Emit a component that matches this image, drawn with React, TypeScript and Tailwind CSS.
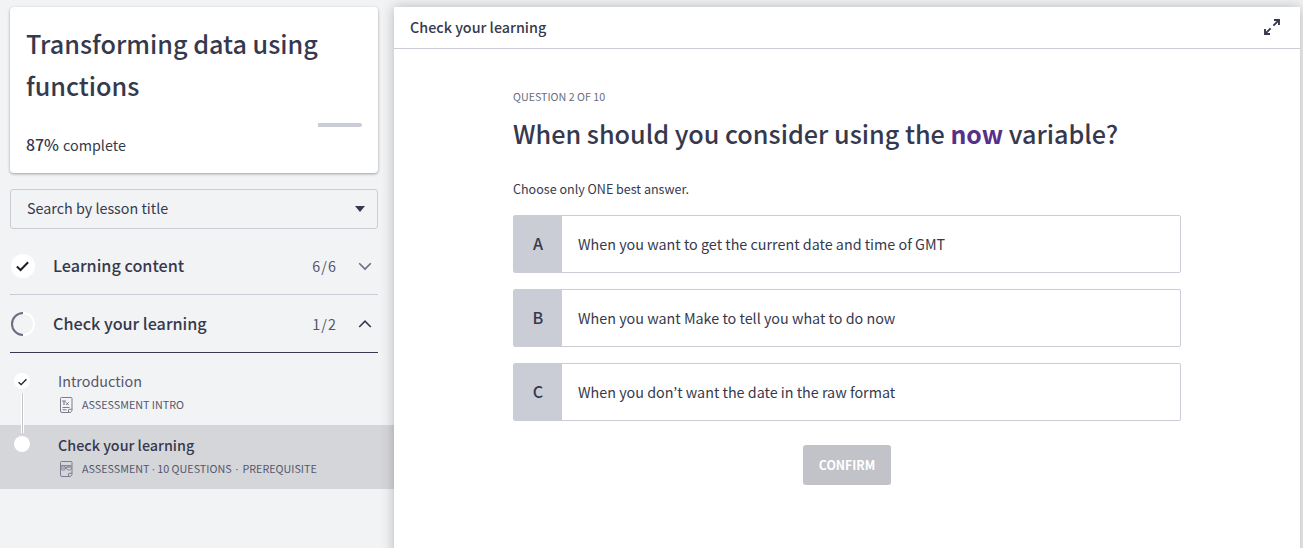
import type { ReactNode } from "react";

const answers = [
  { key: "A", text: "When you want to get the current date and time of GMT" },
  { key: "B", text: "When you want Make to tell you what to do now" },
  { key: "C", text: "When you don’t want the date in the raw format" },
];

function DocIcon({ children }: { children: ReactNode }) {
  return (
    <svg width="14" height="18" viewBox="0 0 14 18" fill="none" stroke="#7b7c90" className="ml-[1px] shrink-0">
      <path d="M9.5 16.5H3Q1.5 16.5 1.5 15V2.5Q1.5 1.5 2.5 1.5H12Q13 1.5 13 2.5V14.5L11.5 16.5H9.5V14Q9.5 13.3 10.2 13.3H13" />
      {children}
    </svg>
  );
}

function Check({ size }: { size: number }) {
  return (
    <svg width={size} height={size} viewBox="0 0 12 12" fill="none" stroke="#1d1d25" strokeWidth="1.8">
      <path d="M0.8 7L4.2 10.2L11.2 3" />
    </svg>
  );
}

function Chevron({ up = false }: { up?: boolean }) {
  return (
    <svg width="14" height="14" viewBox="0 0 14 14" fill="none" strokeWidth="1.6" stroke={up ? "#36394d" : "#6b6c80"}>
      <path d={up ? "M1.2 10L7 4.2L12.8 10" : "M1.2 4.2L7 10L12.8 4.2"} />
    </svg>
  );
}

function Dot({ wide = false }: { wide?: boolean }) {
  return <span className={`font-['Open_Sans',sans-serif] ${wide ? "mx-[4px]" : "mx-[2.5px]"}`}>·</span>;
}

function Section({ icon, title, count, open }: { icon: ReactNode; title: string; count: string; open?: boolean }) {
  return (
    <div className={`flex h-[58px] items-center border-b pr-[6px] ${open ? "border-[#36394d]" : "border-[#caccd6]"}`}>
      <div className="flex h-6 w-[25px] shrink-0 items-center justify-center">{icon}</div>
      <span className="ml-[18px] flex-1 pb-[2px] text-[16.18px] font-medium">{title}</span>
      <span className="mr-[21px] text-[14.3px] tracking-[1.1px] text-[#55566b]">{count}</span>
      <Chevron up={open} />
    </div>
  );
}

export default function App() {
  return (
    <div className="flex h-[548px] w-[1303px] overflow-hidden bg-[#f2f3f5] pt-[7px] font-['Noto_Sans_CJK_KR','Noto_Sans_CJK_SC',sans-serif] text-[14.34px] leading-6 text-[#36394d]">
      <aside className="w-[394px] shrink-0">
        <section className="ml-[10px] h-[166px] w-[368px] rounded-[4px] bg-white px-4 pt-[15px] shadow-[0_1px_3px_rgba(0,0,0,0.35)]">
          <h1 className="text-[25.2px] leading-[42px] font-medium">Transforming data using functions</h1>
          <div className="mt-[17px] flex h-1 justify-end">
            <div className="w-[44px] rounded-r-[2px] bg-[#caccd6]" />
          </div>
          <p className="mt-[6px] flex items-baseline">
            <span className="text-[15.9px] font-medium">87%</span>
            <span className="ml-1">complete</span>
          </p>
        </section>

        <div className="mt-4 ml-[10px] flex h-10 w-[368px] items-center justify-between rounded-[3px] border border-[#caccd6] pr-3 pl-4">
          <span className="pb-[2px]">Search by lesson title</span>
          <svg width="10" height="6" viewBox="0 0 10 6" fill="#36394d">
            <path d="M0 0H10L5 6Z" />
          </svg>
        </div>

        <nav className="mt-2 ml-[10px] w-[368px]">
          <Section
            title="Learning content"
            count="6/6"
            icon={
              <span className="flex size-6 items-center justify-center rounded-full bg-white">
                <Check size={13} />
              </span>
            }
          />
          <Section
            open
            title="Check your learning"
            count="1/2"
            icon={
              <svg width="24" height="24" viewBox="0 0 24 24" fill="none" strokeWidth="2">
                <path stroke="#fff" d="M12 1A11 11 0 0 1 12 23" />
                <path stroke="#6b6c80" d="M12 1A11 11 0 0 0 12 23" />
              </svg>
            }
          />
        </nav>

        <div className="mt-2 flex h-16">
          <div className="flex w-[44px] shrink-0 flex-col items-center pt-3">
            <span className="flex size-4 shrink-0 items-center justify-center rounded-full bg-white">
              <Check size={9} />
            </span>
            <span className="relative z-10 mt-1 ml-[1px] h-10 w-[3px] shrink-0 border-x border-x-white bg-[#c4c5cb]" />
          </div>
          <div className="ml-[14px] pt-2">
            <div className="text-[#55566b]">Introduction</div>
            <div className="mt-[1px] flex h-[22px] items-center gap-[9px] text-[10.75px] text-[#55566b]">
              <DocIcon>
                <path strokeWidth="1.2" d="M3 5H7M5 5V9" />
                <path d="M7 6.3L9.6 9M9.6 6.3L7 9M3.5 11.5H10.5M3.5 13.8H7.5" />
              </DocIcon>
              <span>ASSESSMENT INTRO</span>
            </div>
          </div>
        </div>
        <div className="flex h-16 bg-[#d5d6da]">
          <div className="flex w-[44px] shrink-0 justify-center pt-[11px]">
            <span className="size-4 rounded-full bg-white" />
          </div>
          <div className="ml-[14px] pt-2">
            <div className="font-medium">Check your learning</div>
            <div className="mt-[1px] flex h-[22px] items-center gap-[9px] text-[10.75px] text-[#55566b]">
              <DocIcon>
                <g strokeWidth="0.9">
                  <ellipse cx="4.2" cy="8" rx="2.4" ry="2.2" />
                  <ellipse cx="10" cy="8" rx="2.4" ry="2.2" />
                  <path d="M2.5 8H5.5L8.5 7.2H11.5M2 5.6H12.5" />
                </g>
              </DocIcon>
              <span>
                ASSESSMENT
                <Dot />
                10 QUESTIONS
                <Dot wide />
                PREREQUISITE
              </span>
            </div>
          </div>
        </div>
      </aside>

      <main className="h-[560px] w-[906px] shrink-0 bg-white shadow-[0_0_12px_rgba(0,0,0,0.25)]">
        <header className="flex h-[42px] items-center justify-between border-b border-[#caccd6] pr-5 pl-4">
          <span className="pb-[2px] font-medium">Check your learning</span>
          <svg width="16" height="16" viewBox="0 0 16 16" fill="none" stroke="#36394d" strokeWidth="1.9" className="-mt-[2px]">
            <path d="M9.4 6.6L14.6 1.4M10 1H15V6M6.6 9.4L1.4 14.6M1 10V15H6" />
          </svg>
        </header>
        <div className="mx-auto w-[668px] pt-9">
          <div className="text-[10.7px] text-[#6b6c80]">QUESTION 2 OF 10</div>
          <h2 className="mt-[3px] text-[25.19px] leading-[42px] font-medium">
            When should you consider using the <b className="text-[24.8px] font-bold text-[#57308a]">now</b> variable?
          </h2>
          <p className="mt-[23px] text-[12.54px]">Choose only ONE best answer.</p>
          <div className="mt-[14px] flex flex-col gap-4">
            {answers.map((a) => (
              <div key={a.key} className="flex h-[58px] overflow-hidden rounded-[2px] border border-[#caccd6]">
                <div className="flex w-12 items-center justify-center bg-[#caccd6] pb-[2px] text-[16.15px] font-medium">{a.key}</div>
                <div className="flex items-center pl-4">{a.text}</div>
              </div>
            ))}
          </div>
          <button className="mx-auto mt-6 block h-10 w-[88px] rounded-[3px] bg-[#c2c3c9] text-[12.3px] font-bold text-white">
            CONFIRM
          </button>
        </div>
      </main>
    </div>
  );
}
